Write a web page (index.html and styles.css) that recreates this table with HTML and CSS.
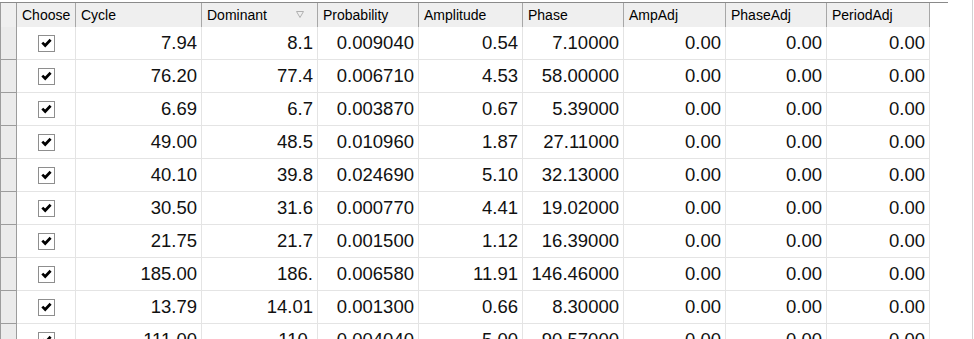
FILE: index.html
```html
<!DOCTYPE html>
<html>
<head>
<meta charset="utf-8">
<link rel="stylesheet" href="styles.css">
</head>
<body>
<div class="topline"></div>
<div class="main">
  <div class="grid">
    <div class="row head">
      <div class="rh corner"></div>
      <div class="hc">Choose</div>
      <div class="hc">Cycle</div>
      <div class="hc sort">Dominant<svg class="sortglyph" width="8" height="7" viewBox="0 0 8 7"><path d="M0.5 0.5 H7.5 L4 6.5 Z" fill="none" stroke="#b0b0b0" stroke-width="1"/></svg></div>
      <div class="hc">Probability</div>
      <div class="hc">Amplitude</div>
      <div class="hc">Phase</div>
      <div class="hc">AmpAdj</div>
      <div class="hc">PhaseAdj</div>
      <div class="hc">PeriodAdj</div>
    </div>
    <div class="row"><div class="rh"></div><div class="dc cb"><span class="box"><svg width="11" height="10" viewBox="0 0 11 10"><path d="M1.3 4.6 L4.2 7.5 L9.6 1.8" fill="none" stroke="#000" stroke-width="2.7"/></svg></span></div><div class="dc">7.94</div><div class="dc">8.1</div><div class="dc">0.009040</div><div class="dc">0.54</div><div class="dc">7.10000</div><div class="dc">0.00</div><div class="dc">0.00</div><div class="dc">0.00</div></div>
    <div class="row"><div class="rh"></div><div class="dc cb"><span class="box"><svg width="11" height="10" viewBox="0 0 11 10"><path d="M1.3 4.6 L4.2 7.5 L9.6 1.8" fill="none" stroke="#000" stroke-width="2.7"/></svg></span></div><div class="dc">76.20</div><div class="dc">77.4</div><div class="dc">0.006710</div><div class="dc">4.53</div><div class="dc">58.00000</div><div class="dc">0.00</div><div class="dc">0.00</div><div class="dc">0.00</div></div>
    <div class="row"><div class="rh"></div><div class="dc cb"><span class="box"><svg width="11" height="10" viewBox="0 0 11 10"><path d="M1.3 4.6 L4.2 7.5 L9.6 1.8" fill="none" stroke="#000" stroke-width="2.7"/></svg></span></div><div class="dc">6.69</div><div class="dc">6.7</div><div class="dc">0.003870</div><div class="dc">0.67</div><div class="dc">5.39000</div><div class="dc">0.00</div><div class="dc">0.00</div><div class="dc">0.00</div></div>
    <div class="row"><div class="rh"></div><div class="dc cb"><span class="box"><svg width="11" height="10" viewBox="0 0 11 10"><path d="M1.3 4.6 L4.2 7.5 L9.6 1.8" fill="none" stroke="#000" stroke-width="2.7"/></svg></span></div><div class="dc">49.00</div><div class="dc">48.5</div><div class="dc">0.010960</div><div class="dc">1.87</div><div class="dc">27.11000</div><div class="dc">0.00</div><div class="dc">0.00</div><div class="dc">0.00</div></div>
    <div class="row"><div class="rh"></div><div class="dc cb"><span class="box"><svg width="11" height="10" viewBox="0 0 11 10"><path d="M1.3 4.6 L4.2 7.5 L9.6 1.8" fill="none" stroke="#000" stroke-width="2.7"/></svg></span></div><div class="dc">40.10</div><div class="dc">39.8</div><div class="dc">0.024690</div><div class="dc">5.10</div><div class="dc">32.13000</div><div class="dc">0.00</div><div class="dc">0.00</div><div class="dc">0.00</div></div>
    <div class="row"><div class="rh"></div><div class="dc cb"><span class="box"><svg width="11" height="10" viewBox="0 0 11 10"><path d="M1.3 4.6 L4.2 7.5 L9.6 1.8" fill="none" stroke="#000" stroke-width="2.7"/></svg></span></div><div class="dc">30.50</div><div class="dc">31.6</div><div class="dc">0.000770</div><div class="dc">4.41</div><div class="dc">19.02000</div><div class="dc">0.00</div><div class="dc">0.00</div><div class="dc">0.00</div></div>
    <div class="row"><div class="rh"></div><div class="dc cb"><span class="box"><svg width="11" height="10" viewBox="0 0 11 10"><path d="M1.3 4.6 L4.2 7.5 L9.6 1.8" fill="none" stroke="#000" stroke-width="2.7"/></svg></span></div><div class="dc">21.75</div><div class="dc">21.7</div><div class="dc">0.001500</div><div class="dc">1.12</div><div class="dc">16.39000</div><div class="dc">0.00</div><div class="dc">0.00</div><div class="dc">0.00</div></div>
    <div class="row"><div class="rh"></div><div class="dc cb"><span class="box"><svg width="11" height="10" viewBox="0 0 11 10"><path d="M1.3 4.6 L4.2 7.5 L9.6 1.8" fill="none" stroke="#000" stroke-width="2.7"/></svg></span></div><div class="dc">185.00</div><div class="dc">186.</div><div class="dc">0.006580</div><div class="dc">11.91</div><div class="dc">146.46000</div><div class="dc">0.00</div><div class="dc">0.00</div><div class="dc">0.00</div></div>
    <div class="row"><div class="rh"></div><div class="dc cb"><span class="box"><svg width="11" height="10" viewBox="0 0 11 10"><path d="M1.3 4.6 L4.2 7.5 L9.6 1.8" fill="none" stroke="#000" stroke-width="2.7"/></svg></span></div><div class="dc">13.79</div><div class="dc">14.01</div><div class="dc">0.001300</div><div class="dc">0.66</div><div class="dc">8.30000</div><div class="dc">0.00</div><div class="dc">0.00</div><div class="dc">0.00</div></div>
    <div class="row"><div class="rh"></div><div class="dc cb"><span class="box"><svg width="11" height="10" viewBox="0 0 11 10"><path d="M1.3 4.6 L4.2 7.5 L9.6 1.8" fill="none" stroke="#000" stroke-width="2.7"/></svg></span></div><div class="dc">111.00</div><div class="dc">110.</div><div class="dc">0.004040</div><div class="dc">5.00</div><div class="dc">90.57000</div><div class="dc">0.00</div><div class="dc">0.00</div><div class="dc">0.00</div></div>
  </div>
  <div class="rest"></div>
</div>
</body>
</html>
```

FILE: styles.css
```css
html, body {
  margin: 0;
  padding: 0;
  background: #ffffff;
}
body {
  width: 974px;
  height: 339px;
  overflow: hidden;
  font-family: "Liberation Sans", Arial, sans-serif;
  color: #000;
}
.topline {
  margin-top: 2px;
  width: 947px;
  height: 1px;
  background: #8a8a8a;
  border-right: 1px solid #8a8a8a;
}
.main {
  display: flex;
  width: 973px;
  height: 336px;
}
.grid {
  width: 930px;
  flex: none;
}
.rest {
  flex: 1;
  border-right: 1px solid #d2d2d2;
  margin-top: -3px;
}
.row {
  display: grid;
  grid-template-columns: 17px 59px 126px 116px 101px 104px 101px 102px 101px 103px;
  height: 33px;
}
.row.head {
  height: 24px;
  background: #efefef;
}
.rh {
  box-sizing: border-box;
  background: #ebebeb;
  border-left: 1px solid #9c9c9c;
  border-right: 1px solid #9c9c9c;
  border-bottom: 1px solid #9c9c9c;
}
.rh.corner {
  background: #efefef;
  border-bottom: none;
}
.hc {
  box-sizing: border-box;
  font-size: 14px;
  line-height: 24px;
  padding-left: 5px;
  border-right: 1px solid #a7a7a7;
  white-space: nowrap;
  overflow: hidden;
}
.hc.sort {
  display: flex;
  align-items: center;
  justify-content: space-between;
  padding-right: 13px;
}
.sortglyph {
  display: block;
  margin-top: -2px;
}
.dc {
  box-sizing: border-box;
  font-size: 18.5px;
  line-height: 32px;
  text-align: right;
  padding-right: 4px;
  border-right: 1px solid #e4e4e4;
  border-bottom: 1px solid #e4e4e4;
  white-space: nowrap;
  overflow: hidden;
  color: #111;
}
.dc.cb {
  display: flex;
  align-items: center;
  justify-content: center;
  padding-right: 0;
}
.box {
  box-sizing: border-box;
  width: 17px;
  height: 17px;
  border: 1px solid #8e8e8e;
  background: #fff;
  display: flex;
  align-items: center;
  justify-content: center;
}
.box svg {
  display: block;
}
```
